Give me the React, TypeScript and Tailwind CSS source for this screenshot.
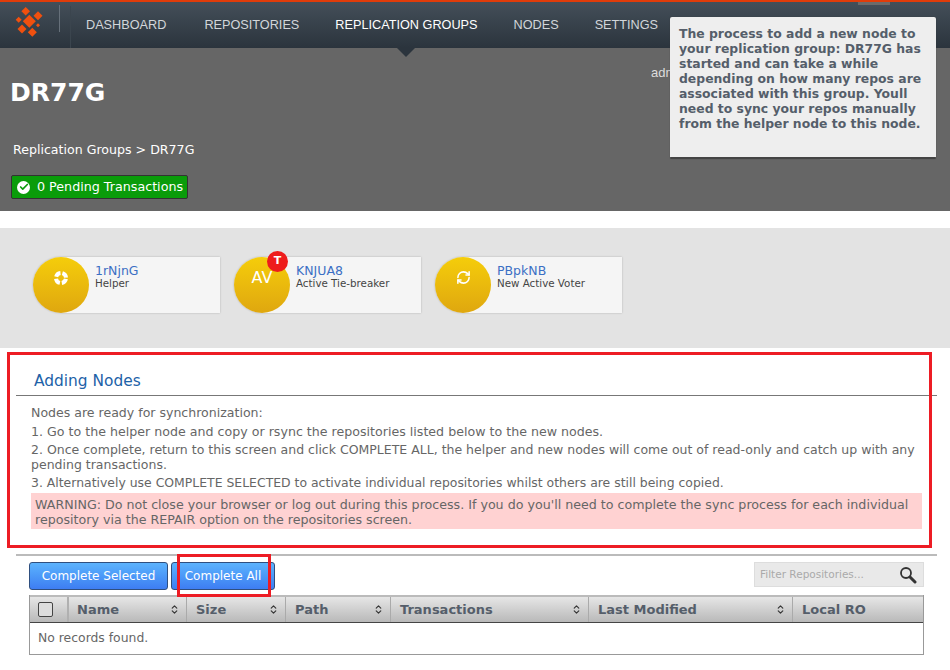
import React from "react";
import { RefreshCw, ChevronsUpDown, Check } from "lucide-react";

const navItems = ["DASHBOARD", "REPOSITORIES", "REPLICATION GROUPS", "NODES", "SETTINGS"];

const nodes = [
  { name: "1rNjnG", role: "Helper", icon: "help" },
  { name: "KNJUA8", role: "Active Tie-breaker", icon: "av" },
  { name: "PBpkNB", role: "New Active Voter", icon: "sync" },
];

const columns = [
  { label: "Name", width: "w-[118px] pl-[8px]", sort: true },
  { label: "Size", width: "w-[99px] pl-[9px]", sort: true },
  { label: "Path", width: "w-[105px] pl-[9px]", sort: true },
  { label: "Transactions", width: "w-[198px] pl-[9px]", sort: true },
  { label: "Last Modified", width: "w-[204px] pl-[9px]", sort: true },
  { label: "Local RO", width: "flex-1 pl-[9px]", sort: false },
];

// centre x, centre y, radius of each diamond in the logo
const diamonds = [
  [10.7, 4.3, 4.3],
  [23, 8.7, 4.5],
  [3.7, 12.7, 3],
  [14.3, 14.3, 6.5],
  [7, 22, 4.5],
  [17.3, 25.3, 4.5],
  [23, 18.3, 2],
];

function Logo() {
  return (
    <svg width="30" height="32" viewBox="0 0 30 32" className="shrink-0">
      {diamonds.map(([x, y, r]) => (
        <polygon
          key={`${x}-${y}`}
          fill="#f0500f"
          points={`${x},${y - r} ${x + r},${y} ${x},${y + r} ${x - r},${y}`}
        />
      ))}
    </svg>
  );
}

function Buoy() {
  return (
    <svg width="16" height="16" viewBox="0 0 16 16">
      <circle cx="8" cy="8" r="5" fill="none" stroke="#fff" strokeWidth="4" strokeDasharray="5.8 2" strokeDashoffset="-1" />
    </svg>
  );
}

function Magnifier() {
  return (
    <svg width="18" height="18" viewBox="0 0 18 18">
      <circle cx="7" cy="7" r="5" fill="none" stroke="#333" strokeWidth="1.8" />
      <line x1="11" y1="11" x2="16" y2="16" stroke="#333" strokeWidth="3" strokeLinecap="round" />
    </svg>
  );
}

function NodeCard({ name, role, icon }: { name: string; role: string; icon: string }) {
  return (
    <div className="relative flex h-14 w-[187px] rounded-l-full rounded-r-[2px] bg-[#f5f5f5] shadow-[0_0_2px_rgba(0,0,0,0.25)]">
      <div className="flex h-14 w-14 shrink-0 items-center justify-center rounded-full bg-gradient-to-b from-[#f5cd0a] to-[#dfa70f] pb-[15px] text-white">
        {icon === "help" && <Buoy />}
        {icon === "av" && <span className="text-[16px]">AV</span>}
        {icon === "sync" && <RefreshCw size={15} strokeWidth={2.5} />}
      </div>
      {icon === "av" && (
        <span className="absolute left-[33px] top-[-6px] flex h-[21px] w-[21px] items-center justify-center rounded-full bg-[#ee1c1c] pb-[1px] text-[11px] font-bold text-white">
          T
        </span>
      )}
      <div className="pl-[6px] pt-[6px]">
        <div className="text-[12.5px] leading-[15px] text-[#3b6fc4]">{name}</div>
        <div className="text-[10.3px] leading-[11px] text-[#444]">{role}</div>
      </div>
    </div>
  );
}

export default function App() {
  return (
    <div className="relative h-[670px] w-[950px] overflow-hidden bg-white font-['DejaVu_Sans',sans-serif] text-[#666]">
      {/* top nav */}
      <div className="relative h-12 border-t-2 border-[#e03c0a] bg-gradient-to-b from-[#444f59] to-[#2b343d]">
        <div className="flex h-full items-center font-['Liberation_Sans',sans-serif] text-[12.7px]">
          <div className="ml-[15px] mb-[4px]">
            <Logo />
          </div>
          <div className="ml-[14px] mb-[14px] h-[27px] w-px bg-[#66707a]" />
          <div className="ml-[10px] h-[42px] w-px self-end bg-[#3b454e]" />
          <nav className="ml-[-3px] mt-[2px] flex">
            {navItems.map((item) => (
              <span
                key={item}
                className={
                  "px-[18px] first:pr-[20px] " + (item === "REPLICATION GROUPS" ? "text-white" : "text-[#d2d6da]")
                }
              >
                {item}
              </span>
            ))}
          </nav>
        </div>
        <div className="absolute left-[858px] top-0 h-[3px] w-8 bg-[#6b6b6b]" />
      </div>

      {/* page header */}
      <div className="relative h-[163px] bg-[#666] pl-[10px]">
        <div className="absolute left-[397px] top-0 h-0 w-0 border-x-[9px] border-t-[9px] border-x-transparent border-t-[#2b343d]" />
        <h1 className="pt-[28px] text-[25px] font-bold leading-[34px] text-white">DR77G</h1>
        <div className="pl-[3px] pt-[32px] text-[12.6px] leading-[16px] text-white">
          Replication Groups &gt; DR77G
        </div>
        <div className="ml-px mt-[17px] flex h-[24px] w-[177px] items-center gap-[7px] rounded-[2px] border border-[#333] bg-[#0a9c0a] pl-[5px] text-[12.7px] text-white">
          <span className="flex h-[13px] w-[13px] items-center justify-center rounded-full bg-white">
            <Check size={10} strokeWidth={4} className="text-[#0a9c0a]" />
          </span>
          0 Pending Transactions
        </div>
        <span className="absolute left-[651px] top-[15px] font-['Liberation_Sans',sans-serif] text-[13px] text-[#ddd]">
          admin
        </span>
        <div className="absolute left-[820px] top-[100px] h-[12px] w-[91px] border border-[#777]" />
      </div>

      {/* nodes */}
      <div className="mt-[17px] flex h-[120px] gap-[14px] bg-[#e3e3e3] pl-[33px] pt-[29px]">
        {nodes.map((n) => (
          <NodeCard key={n.name} {...n} />
        ))}
      </div>

      {/* adding nodes */}
      <div className="pl-4 pr-[13px]">
        <div className="h-[48px] border-b border-[#777] pl-[18px] pt-[23px] text-[15.4px] leading-[20px] text-[#1d62a8]">
          Adding Nodes
        </div>
        <div className="pl-[15px] pr-[15px] pt-[9px] text-[12.5px] leading-[15px]">
          <p className="pb-1 text-[12.55px]">Nodes are ready for synchronization:</p>
          <p className="pb-[3px] text-[12.63px]">1. Go to the helper node and copy or rsync the repositories listed below to the new nodes.</p>
          <p className="pb-[3px]">
            2. Once complete, return to this screen and click COMPLETE ALL, the helper and new nodes will come out of read-only and catch up with any pending transactions.
          </p>
          <p className="pb-[3px] text-[12.43px]">3. Alternatively use COMPLETE SELECTED to activate individual repositories whilst others are still being copied.</p>
          <p className="bg-[#ffd2d2] px-1 pb-[2px] pt-[4px] text-[12.65px]">
            WARNING: Do not close your browser or log out during this process. If you do you'll need to complete the sync process for each individual repository via the REPAIR option on the repositories screen.
          </p>
        </div>
        <div className="mt-[25px] h-[2px] bg-[#bbb]" />
      </div>

      {/* repositories */}
      <div className="pl-[29px] pr-[26px] pt-[6px]">
        <div className="flex h-[28px] items-start gap-[3px]">
          <button className="h-[28px] w-[139px] rounded-[3px] border border-[#2f4f7f] bg-gradient-to-b from-[#5cb3fd] to-[#3e7df2] text-[12px] text-white">
            Complete Selected
          </button>
          <button className="h-[28px] w-[104px] rounded-[3px] border border-[#2f4f7f] bg-gradient-to-b from-[#5cb3fd] to-[#3e7df2] text-[12px] text-white">
            Complete All
          </button>
          <div className="ml-auto flex h-[25px] w-[170px] items-center justify-between border border-[#ddd] bg-[#e9e9e9] pl-[5px] pr-[6px] text-[10.5px] text-[#aaa]">
            Filter Repositories...
            <Magnifier />
          </div>
        </div>
        <div className="mt-[5px] border border-t-0 border-[#999]">
          <div className="flex h-[28px] items-center border-b border-t-2 border-b-[#444] border-t-[#bbb] bg-gradient-to-b from-[#e6e6e6] to-[#b9b9b9] text-[13px] font-bold text-[#555e6a]">
            <div className="flex h-full w-[39px] items-center border-r-2 border-[#b0b0b0] pl-[8px]">
              <span className="h-[15px] w-[15px] rounded-[2px] border border-[#444] bg-[#ddd]" />
            </div>
            {columns.map((c) => (
              <div
                key={c.label}
                className={
                  "flex h-full items-center justify-between border-r border-[#aaa] pr-[6px] last:border-r-0 " + c.width
                }
              >
                {c.label}
                {c.sort && <ChevronsUpDown size={11} strokeWidth={2.5} className="text-[#333]" />}
              </div>
            ))}
          </div>
          <div className="flex h-[31px] items-center pl-[8px] text-[12.4px]">No records found.</div>
        </div>
      </div>

      {/* tooltip */}
      <div className="absolute left-[670px] top-[17px] h-[142px] w-[266px] rounded-[2px] border-b-2 border-[#444] bg-[#eeeeee] pl-[9px] pr-[6px] pt-[9px] text-[12.4px] font-bold leading-[15px] text-[#555e6a] shadow-[0_0_1px_#333]">
        The process to add a new node to your replication group: DR77G has started and can take a while depending on how many repos are associated with this group. Youll need to sync your repos manually from the helper node to this node.
      </div>

      {/* red annotation boxes */}
      <div className="absolute left-[7px] top-[352px] h-[196px] w-[925px] border-[3px] border-[#ed1c24]" />
      <div className="absolute left-[177px] top-[554px] h-[43px] w-[94px] border-[3px] border-[#ed1c24]" />
    </div>
  );
}
